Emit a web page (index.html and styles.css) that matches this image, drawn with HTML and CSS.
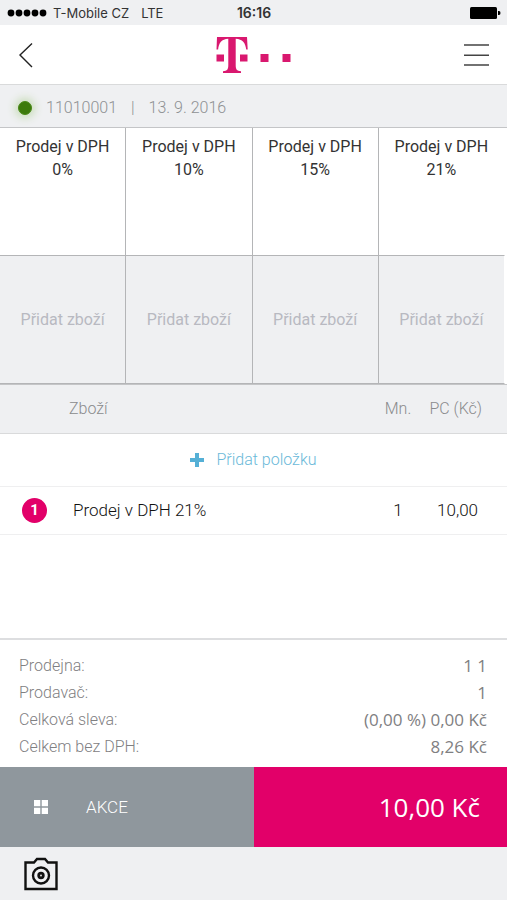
FILE: index.html
```html
<!DOCTYPE html>
<html lang="cs">
<head>
<meta charset="utf-8">
<meta name="viewport" content="width=device-width, initial-scale=1">
<title>Prodej</title>
<link rel="stylesheet" href="styles.css">
</head>
<body>
<div class="status">
  <div class="carrier">
    <svg class="signal" width="40" height="8" viewBox="0 0 40 8" aria-hidden="true"><circle cx="4" cy="4" r="3.4"/><circle cx="12" cy="4" r="3.4"/><circle cx="20" cy="4" r="3.4"/><circle cx="28" cy="4" r="3.4"/><circle cx="36" cy="4" r="3.4"/></svg>
    <span>T-Mobile CZ</span>
    <span class="network">LTE</span>
  </div>
  <span class="clock">16:16</span>
  <svg class="battery" width="32" height="14" viewBox="0 0 32 14" aria-hidden="true"><rect x="1" y="1" width="27" height="12" rx="1.5"/><path d="M29 5h1a1.5 2 0 0 1 0 4h-1z"/></svg>
</div>

<header class="header">
  <button class="icon-button" type="button" aria-label="Zpět">
    <svg width="16" height="28" viewBox="0 0 16 28" fill="none" stroke="#222" stroke-width="1.4"><path d="M14 2.500 2 14l12 12"/></svg>
  </button>
  <svg class="logo" width="76" height="38" viewBox="0 0 76 38" role="img" aria-label="T-Mobile">
    <path d="M1 1h30l.7 12.500h-1.500C29.500 7 26.500 3 19.700 2.700V29c0 4.500 1 5.800 5.300 6.200V37H7v-1.800c4.300-.4 5.300-1.700 5.300-6.200V2.700C5.500 3 2.800 7 2.100 13.500H.5z"/>
    <path d="M.5 18.500H8v7H.5zM24 18.500h7.500v7H24zM44.500 18h8v8h-8zM66.500 18h8v8h-8z"/>
  </svg>
  <button class="icon-button" type="button" aria-label="Menu">
    <svg width="26" height="24" viewBox="0 0 26 24" fill="none" stroke="#444" stroke-width="1.500"><path d="M0 2h25M0 12.200h25M0 22h25"/></svg>
  </button>
</header>

<div class="info">
  <span class="online"></span>
  <span>11010001</span>
  <span>|</span>
  <span>13. 9. 2016</span>
</div>

<main class="main">
  <div class="tiles">
    <button class="tile" type="button">Prodej v DPH 0%</button>
    <button class="tile" type="button">Prodej v DPH 10%</button>
    <button class="tile" type="button">Prodej v DPH 15%</button>
    <button class="tile" type="button">Prodej v DPH 21%</button>
    <button class="tile tile-empty" type="button">Přidat zboží</button>
    <button class="tile tile-empty" type="button">Přidat zboží</button>
    <button class="tile tile-empty" type="button">Přidat zboží</button>
    <button class="tile tile-empty" type="button">Přidat zboží</button>
  </div>

  <table class="items">
    <thead>
      <tr><th class="col-name" colspan="2">Zboží</th><th class="col-count">Mn.</th><th class="col-price">PC (Kč)</th></tr>
    </thead>
    <tbody>
      <tr class="add-row"><td colspan="4">
        <button class="add" type="button">
          <svg width="14" height="14" viewBox="0 0 14 14" aria-hidden="true"><path d="M5 0h4v5h5v4H9v5H5V9H0V5h5z"/></svg>
          Přidat položku
        </button>
      </td></tr>
      <tr class="item"><td class="col-index"><span class="index">1</span></td><td>Prodej v DPH 21%</td><td class="col-count">1</td><td class="col-price">10,00</td></tr>
    </tbody>
  </table>
</main>

<dl class="summary">
  <div class="line"><dt>Prodejna:</dt><dd>1 1</dd></div>
  <div class="line"><dt>Prodavač:</dt><dd>1</dd></div>
  <div class="line"><dt>Celková sleva:</dt><dd>(0,00 %) 0,00 Kč</dd></div>
  <div class="line"><dt>Celkem bez DPH:</dt><dd>8,26 Kč</dd></div>
</dl>

<div class="actions">
  <button class="action" type="button">
    <svg width="14" height="14" viewBox="0 0 14 14" aria-hidden="true"><path d="M0 0h6.300v6.300H0zM7.700 0H14v6.300H7.700zM0 7.700h6.300V14H0zM7.700 7.700H14V14H7.700z"/></svg>
    AKCE
  </button>
  <button class="pay" type="button">10,00 Kč</button>
</div>

<footer class="toolbar">
  <button class="icon-button" type="button" aria-label="Fotoaparát">
    <svg width="34" height="34" viewBox="0 0 34 34" fill="none" stroke="#111" stroke-width="2.400"><path d="M1.500 5.500h8.500l3-3.500h8l3 3.500h8.500V32h-31z"/><circle cx="17" cy="18.500" r="8"/><circle cx="17" cy="18.500" r="2.300" stroke-width="2.800"/></svg>
  </button>
</footer>
</body>
</html>
```
FILE: styles.css
```css
* { box-sizing: border-box; }

body {
  margin: 0;
  min-height: 100vh;
  display: flex;
  flex-direction: column;
  background: #fff;
  color: #333;
  font: 300 16px/24px Roboto, "Liberation Sans", sans-serif;
}

button {
  margin: 0;
  padding: 0;
  border: 0;
  background: none;
  color: inherit;
  font: inherit;
  cursor: pointer;
}

svg { display: block; }

.status {
  display: grid;
  grid-template-columns: 1fr auto 1fr;
  align-items: center;
  height: 25px;
  padding: 0 6px 0 7px;
  background: #eff0f2;
  color: #333;
  font: 400 13px/24px Inter, sans-serif;
}
.carrier { display: flex; align-items: center; gap: 6px; }
.signal, .battery { fill: #000; }
.network { margin-left: 6px; }
.clock { font-size: 14px; font-weight: 600; }
.battery { justify-self: end; }

.header {
  display: grid;
  grid-template-columns: 1fr auto 1fr;
  align-items: center;
  height: 60px;
  padding: 0 17px 0 18px;
  border-bottom: 1px solid #d9dadb;
}
.header .icon-button { justify-self: start; }
.header .icon-button:last-child { justify-self: end; }
.logo { fill: #d9186f; }

.info {
  display: flex;
  align-items: center;
  gap: 14px;
  height: 42px;
  padding: 4px 18px 0;
  background: #eff0f2;
  color: #8e9093;
}
.online {
  width: 14px;
  height: 14px;
  border: 1px solid #4a8a18;
  border-radius: 50%;
  background: #3c7a0b;
  box-shadow: 0 0 8px 3px #c8dcb8;
}

.main { flex: 1; }

.tiles {
  display: grid;
  grid-template-columns: repeat(4, 1fr);
  grid-auto-rows: 128px;
  padding-right: 2px;
  border-top: 1px solid #c4c5c7;
  border-bottom: 1px solid #c4c5c7;
}
.tile {
  display: flex;
  justify-content: center;
  align-items: flex-start;
  padding: 7px 10px;
  border-right: 1px solid #b4b5b7;
  border-bottom: 1px solid #b4b5b7;
  font-weight: 400;
  line-height: 23px;
}
.tile:nth-child(4n) { border-right-color: transparent; }
.tile-empty { align-items: center; background: #eff0f2; background-clip: padding-box; color: #b8b9c1; }

.items { width: 100%; border-collapse: collapse; }
.items th { height: 48px; padding: 0; background: #eff0f2; color: #8a8b8d; font-weight: 300; }
.items td { padding: 0; }
.items thead tr { border-bottom: 1px solid #d9dadb; }
.items tbody tr { border-bottom: 1px solid #efeff0; }
.items .col-name { padding-left: 69px; text-align: left; }
.col-index { width: 73px; }
.items th.col-count { width: 52px; text-align: center; }
.col-count { text-align: center; }
.items .col-price { width: 83px; padding-right: 25px; text-align: right; }
.items td.col-price { padding-right: 29px; }
.add-row { height: 53px; }
.item { height: 48px; color: #111; font-size: 17px; }
.add { display: flex; align-items: center; justify-content: center; gap: 12px; width: 100%; color: #6bb9d9; }
.add svg { fill: #55b0d6; }
.index {
  display: block;
  width: 25px;
  margin-left: 22px;
  border-radius: 50%;
  background: #e20069;
  color: #fff;
  font: 700 15px/25px Roboto, sans-serif;
  text-align: center;
}

.summary { margin: 0; padding: 12px 20px 7px 19px; border-top: 2px solid #dddee0; color: #7f8082; }
.line { display: flex; justify-content: space-between; line-height: 27px; }
.line dd { margin: 0; font: 400 17px/27px "Open Sans", sans-serif; }

.actions { display: grid; grid-template-columns: 1fr 1fr; height: 80px; color: #fff; }
.action { display: flex; align-items: center; gap: 38px; padding-left: 34px; background: #8f979d; font-size: 17px; }
.action svg { fill: #fff; }
.pay { padding-right: 27px; background: #e20069; text-align: right; font: 400 26px/32px "Open Sans", sans-serif; }

.toolbar { display: flex; align-items: center; height: 53px; padding: 0 24px; background: #eff0f2; }
```
